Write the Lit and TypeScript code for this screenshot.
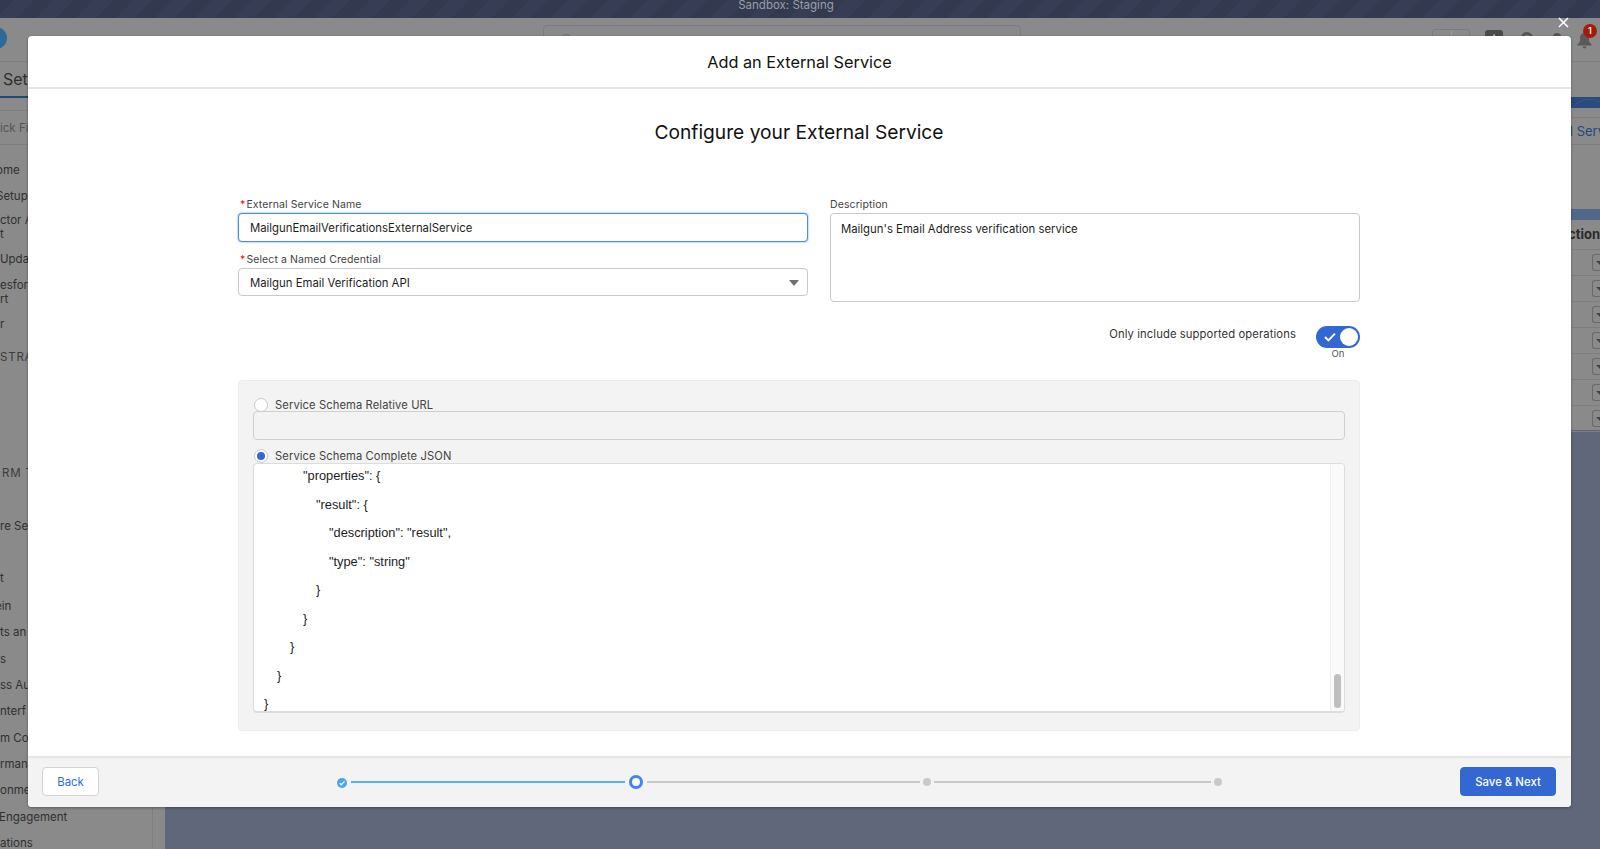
import { LitElement, css, html } from 'lit'
import { customElement } from 'lit/decorators.js'

// bits of the setup menu that stick out left of the dialog
const menu = [
  { text: '', h: 12 },
  { text: 'ome', h: 26, x: -4 },
  { text: 'Setup', h: 26, x: -4 },
  { text: 'ctor A\nt', h: 36 },
  { text: 'Upda', h: 27 },
  { text: 'esforc\nrt', h: 39 },
  { text: 'r', h: 26 },
  { text: 'STRA', h: 40, head: true },
  { text: '', h: 83 },
  { text: 'RM T', h: 26, head: true, x: 2 },
  { text: '', h: 27 },
  { text: 're Se', h: 26 },
  { text: '', h: 26 },
  { text: 't', h: 26 },
  { text: '', h: 2 },
  { text: 'ein', h: 26.3, x: -5 },
  { text: 'ts an', h: 26.3 },
  { text: 's', h: 26.3 },
  { text: 'ss Au', h: 26.3 },
  { text: 'nterf', h: 26.3 },
  { text: 'm Co', h: 26.3 },
  { text: 'rmanc', h: 26.3 },
  { text: 'onmen', h: 26.3 },
  { text: 'Engagement', h: 26.3, x: -1 },
  { text: 'ations', h: 26.3 },
]

const schema = [
  { level: 3, text: '"properties": {' },
  { level: 4, text: '"result": {' },
  { level: 5, text: '"description": "result",' },
  { level: 5, text: '"type": "string"' },
  { level: 4, text: '}' },
  { level: 3, text: '}' },
  { level: 2, text: '}' },
  { level: 1, text: '}' },
  { level: 0, text: '}' },
]

@customElement('app-root')
export class AppRoot extends LitElement {
  static styles = css`
    :host {
      display: block;
      position: relative;
      height: 100vh;
      overflow: hidden;
      font-family: Inter, 'Liberation Sans', sans-serif;
      background: #61677a;
    }

    /* page behind the dialog */
    .sandbox {
      height: 18px;
      background: repeating-linear-gradient(-45deg, #363d54 0 14px, #333a50 14px 28px);
      color: #9b9da6;
      font-size: 11.5px;
      line-height: 10px;
      text-align: center;
      padding-right: 28px;
      box-sizing: border-box;
      overflow: hidden;
    }
    .nav {
      height: 44px;
      box-sizing: border-box;
      background: #8a8a8a;
      border-bottom: 1px solid #7e7e7e;
      display: flex;
      align-items: flex-start;
      padding: 9px 8px 0 0;
      overflow: hidden;
    }
    .logo {
      width: 22px;
      height: 22px;
      border-radius: 50%;
      background: #2d6a9c;
      margin-left: -15px;
    }
    .search {
      width: 478px;
      height: 30px;
      box-sizing: border-box;
      margin: -2px 0 0 536px;
      border: 1px solid #7c7c7c;
      border-radius: 4px;
      font-size: 12px;
      line-height: 30px;
      color: #6d6d6d;
      padding-left: 46px;
      position: relative;
    }
    .search::before {
      content: '';
      position: absolute;
      left: 18px;
      top: 8px;
      width: 7px;
      height: 7px;
      border: 1.5px solid #6d6d6d;
      border-radius: 50%;
    }
    .tools {
      margin-left: auto;
      display: flex;
      align-items: flex-start;
    }
    .split {
      width: 38px;
      height: 22px;
      margin-top: 2px;
      box-sizing: border-box;
      border: 1px solid #7c7c7c;
      border-radius: 3px;
      display: flex;
      justify-content: flex-end;
    }
    .split span {
      width: 17px;
      border-left: 1px solid #9a9a9a;
    }
    .plus {
      width: 18px;
      height: 18px;
      margin: 3px 18px 0 15px;
      border-radius: 3px;
      background: #4a4a4a;
      color: #ddd;
      font-size: 16px;
      line-height: 15px;
      text-align: center;
    }
    .round {
      width: 12px;
      height: 12px;
      margin: 5px 18px 0 0;
      box-sizing: border-box;
      border: 3px solid #555;
      border-radius: 50%;
    }
    .round.gear {
      width: 8px;
      height: 8px;
      border: 0;
      background: #555;
      margin: 6px 16px 0 2px;
    }
    .bell {
      position: relative;
      width: 15px;
      height: 16px;
      margin-top: 6px;
    }
    .bell svg {
      display: block;
    }
    .badge {
      position: absolute;
      top: -9px;
      left: 6px;
      width: 14px;
      height: 14px;
      border-radius: 50%;
      background: #a31c0b;
      color: #eee;
      font-size: 9px;
      font-weight: 600;
      line-height: 14px;
      text-align: center;
    }
    .tabs {
      height: 36px;
      box-sizing: border-box;
      background: #8a8a8a;
      border-bottom: 1px solid #7e7e7e;
    }
    .tab {
      width: 40px;
      height: 36px;
      box-sizing: border-box;
      border-bottom: 2px solid #1e4a74;
      padding: 7px 0 0 3px;
      font-size: 16px;
      line-height: 20px;
      color: #2f2f2f;
    }
    .content {
      display: flex;
      height: 751px;
    }
    .side {
      width: 165px;
      box-sizing: border-box;
      background: #8a8a8a;
      padding-top: 12px;
      overflow: hidden;
    }
    .side-in {
      width: 152px;
      height: 100%;
      border-right: 1px solid #7e7e7e;
    }
    .quick {
      height: 35px;
      box-sizing: border-box;
      border-top: 1px solid #7e7e7e;
      border-bottom: 1px solid #7e7e7e;
      font-size: 11.5px;
      line-height: 35px;
      color: #555;
    }
    .item {
      display: flex;
      align-items: center;
      font-size: 11.5px;
      line-height: 14px;
      color: #303030;
      white-space: pre;
    }
    .item.head {
      letter-spacing: 0.8px;
      color: #3c3c3c;
    }
    .rest {
      flex: 1;
      min-width: 0;
      margin-top: -1px;
    }
    .card {
      height: 333px;
      background: #8a8a8a;
    }
    .banner {
      height: 11px;
      background: repeating-radial-gradient(circle at 1425px 26px, #2b4a7d 0 11px, #365587 11px 12px);
    }
    .banner.low {
      background: #50688a;
    }
    .crumb {
      margin-top: 9px;
      height: 28px;
      box-sizing: border-box;
      border-top: 1px solid #7e7e7e;
      border-bottom: 1px solid #7e7e7e;
      text-align: right;
      font-size: 13px;
      line-height: 27px;
      color: #23477f;
      white-space: nowrap;
      overflow: hidden;
      margin-bottom: 64px;
    }
    .crumb span {
      margin-right: -5px;
    }
    .col-head {
      height: 30px;
      box-sizing: border-box;
      border-bottom: 1px solid #7e7e7e;
      text-align: right;
      font-size: 13px;
      font-weight: 700;
      line-height: 29px;
      color: #2a2a2a;
    }
    .row {
      height: 26px;
      box-sizing: border-box;
      border-bottom: 1px solid #7e7e7e;
      display: flex;
      justify-content: flex-end;
      align-items: center;
      overflow: hidden;
    }
    .row span {
      width: 8px;
      height: 17px;
      box-sizing: border-box;
      border: 1px solid #6a6a6a;
      border-right: 0;
      border-radius: 3px 0 0 3px;
      position: relative;
    }
    .row span::after {
      content: '';
      position: absolute;
      left: 3px;
      top: 6px;
      border-left: 4px solid transparent;
      border-right: 4px solid transparent;
      border-top: 4px solid #444;
    }

    /* dialog */
    .modal {
      position: absolute;
      left: 28px;
      top: 36px;
      width: 1543px;
      height: 771px;
      background: #fff;
      border-radius: 4px;
      box-shadow: 0 1px 3px rgba(0, 0, 0, 0.35);
      display: flex;
      flex-direction: column;
      overflow: hidden;
    }
    .close {
      position: absolute;
      left: 1558px;
      top: 17px;
      display: block;
    }
    .modal-head {
      height: 53px;
      box-sizing: border-box;
      border-bottom: 2px solid #e6e6e6;
      text-align: center;
      font-size: 16.3px;
      line-height: 53px;
      color: #111;
    }
    .modal-body {
      flex: 1;
      padding: 29px 211px 0 210px;
      min-height: 0;
    }
    h2 {
      margin: 0;
      font-size: 19.2px;
      font-weight: 400;
      line-height: 28px;
      text-align: center;
      color: #111;
    }
    .form {
      display: grid;
      grid-template-columns: 570px 530px;
      column-gap: 22px;
      margin-top: 51px;
    }
    .lab {
      font-size: 10.5px;
      line-height: 16px;
      color: #444;
      letter-spacing: 0.1px;
    }
    .req {
      color: #d4131b;
      margin: 0 1px 0 2px;
    }
    .lab.second {
      margin-top: 10px;
    }
    .box {
      box-sizing: border-box;
      border: 1px solid #c9c9c9;
      border-radius: 4px;
      background: #fff;
      font-size: 11.35px;
      color: #1d1d1d;
      padding: 0 11px;
    }
    .name {
      height: 29px;
      line-height: 28px;
      border: 1px solid #4a8af4;
      box-shadow: 0 0 2px #4a8af4;
    }
    .pick {
      height: 28px;
      line-height: 28px;
      position: relative;
    }
    .pick::after {
      content: '';
      position: absolute;
      right: 8px;
      top: 11px;
      border-left: 5px solid transparent;
      border-right: 5px solid transparent;
      border-top: 6px solid #707070;
    }
    .desc {
      height: 89px;
      line-height: 16px;
      padding: 7px 10px 0;
    }
    .only {
      margin-top: 25px;
      display: flex;
      justify-content: flex-end;
      gap: 20px;
      height: 28px;
    }
    .only-text {
      font-size: 11.25px;
      line-height: 14px;
      color: #333;
      letter-spacing: 0.1px;
    }
    .toggle-wrap {
      width: 44px;
      text-align: center;
      font-size: 9.5px;
      line-height: 10px;
      color: #555;
    }
    .toggle {
      height: 22px;
      margin: -1px 0 1px;
      box-sizing: border-box;
      border-radius: 11px;
      background: #3367d1;
      display: flex;
      align-items: center;
      justify-content: space-between;
      padding: 0 2px 0 8px;
    }
    .knob {
      width: 18px;
      height: 18px;
      border-radius: 50%;
      background: #fff;
    }
    .panel {
      margin-top: 25px;
      height: 351px;
      box-sizing: border-box;
      background: #f3f3f3;
      border: 1px solid #ececec;
      border-radius: 4px;
      padding: 16px 14px 0;
    }
    .radio {
      display: flex;
      align-items: center;
      gap: 7px;
      height: 16px;
      margin-bottom: -2px;
      font-size: 11.2px;
      color: #444;
      letter-spacing: 0.1px;
    }
    .radio.two {
      margin: 8px 0 0;
      height: 15px;
    }
    .dot {
      width: 14px;
      height: 14px;
      margin-left: 1px;
      box-sizing: border-box;
      border: 1px solid #c9c9c9;
      border-radius: 50%;
      background: #fff;
      display: flex;
      align-items: center;
      justify-content: center;
      flex: none;
    }
    .dot i {
      width: 8px;
      height: 8px;
      border-radius: 50%;
      background: #3367d1;
    }
    .off {
      height: 29px;
      box-sizing: border-box;
      background: #f3f3f3;
      border: 1px solid #cfcfcf;
      border-radius: 4px;
    }
    .json {
      height: 250px;
      box-sizing: border-box;
      background: #fff;
      border: 1px solid #dcdcdc;
      border-bottom-width: 2px;
      border-radius: 4px;
      display: flex;
      overflow: hidden;
    }
    .code {
      flex: 1;
      margin-top: -2px;
      padding-left: 10px;
      font-family: 'Liberation Sans', Arial, sans-serif;
      font-size: 12.8px;
      line-height: 28.5px;
      color: #1d1d1d;
      overflow: hidden;
    }
    .code div {
      white-space: pre;
    }
    .bar {
      width: 13px;
      background: #fafafa;
      border-left: 1px solid #ececec;
      display: flex;
      flex-direction: column;
      justify-content: flex-end;
      align-items: center;
      padding-bottom: 3px;
    }
    .bar i {
      width: 7px;
      height: 34px;
      border-radius: 4px;
      background: #bfbfbf;
    }
    .modal-foot {
      height: 51px;
      box-sizing: border-box;
      background: #f3f3f3;
      border-top: 2px solid #e6e6e6;
      display: flex;
      align-items: flex-start;
      padding: 9px 15px 0 14px;
    }
    .btn {
      height: 29px;
      box-sizing: border-box;
      border: 1px solid #d4d4d4;
      border-radius: 4px;
      background: #fff;
      color: #2f6fd6;
      font-size: 11.4px;
      line-height: 28px;
      text-align: center;
      width: 57px;
    }
    .btn.save {
      width: 96px;
      margin-left: auto;
      background: #3367d1;
      border-color: #3367d1;
      color: #fff;
      font-weight: 500;
    }
    .steps {
      display: flex;
      align-items: center;
      margin: 8px 0 0 238px;
      height: 14px;
    }
    .done {
      display: block;
      width: 10px;
      height: 10px;
      margin: 1px 4px 0 0;
    }
    .line {
      height: 2px;
      background: #c9c9c9;
    }
    .line.blue {
      background: #5ab0f5;
    }
    .now {
      width: 14px;
      height: 14px;
      box-sizing: border-box;
      border: 3px solid #3f84f7;
      border-radius: 50%;
      background: #fff;
      margin: 0 4px;
    }
    .next {
      width: 8px;
      height: 8px;
      border-radius: 50%;
      background: #c9c9c9;
      margin: 0 3px;
    }
  `

  render() {
    return html`
      <div class="sandbox">Sandbox: Staging</div>
      <div class="nav">
        <div class="logo"></div>
        <div class="search">Search Setup</div>
        <div class="tools">
          <div class="split"><span></span></div>
          <div class="plus">+</div>
          <div class="round"></div>
          <div class="round gear"></div>
          <div class="bell">
            <svg width="15" height="16" viewBox="0 0 15 16">
              <path fill="#5a5a5a" d="M7.5 0C4.6 0 3 2.2 3 5v3.4L.6 11.3c-.4.5-.1 1.2.6 1.2h12.6c.7 0 1-.7.6-1.2L12 8.4V5c0-2.8-1.6-5-4.5-5z" />
              <path fill="#5a5a5a" d="M5.6 13.6h3.8c0 1.2-.8 2-1.9 2s-1.9-.8-1.9-2z" />
            </svg>
            <span class="badge">1</span>
          </div>
        </div>
      </div>
      <div class="tabs"><div class="tab">Set</div></div>
      <div class="content">
        <div class="side">
          <div class="side-in">
            <div class="quick">ick Fi</div>
            ${menu.map(
              (m) => html`<div class="item ${m.head ? 'head' : ''}" style="height:${m.h}px;margin-left:${m.x || 0}px">${m.text}</div>`
            )}
          </div>
        </div>
        <div class="rest">
          <div class="card">
            <div class="banner"></div>
            <div class="crumb"><span>External Serv</span></div>
            <div class="banner low"></div>
            <div class="col-head">Action</div>
            ${[1, 2, 3, 4, 5, 6, 7].map(() => html`<div class="row"><span></span></div>`)}
          </div>
        </div>
      </div>

      <div class="modal">
        <div class="modal-head">Add an External Service</div>
        <div class="modal-body">
          <h2>Configure your External Service</h2>
          <div class="form">
            <div>
              <div class="lab"><span class="req">*</span>External Service Name</div>
              <div class="box name">MailgunEmailVerificationsExternalService</div>
              <div class="lab second"><span class="req">*</span>Select a Named Credential</div>
              <div class="box pick">Mailgun Email Verification API</div>
            </div>
            <div>
              <div class="lab">Description</div>
              <div class="box desc">Mailgun's Email Address verification service</div>
            </div>
          </div>
          <div class="only">
            <div class="only-text">Only include supported operations</div>
            <div class="toggle-wrap">
              <div class="toggle">
                <svg width="12" height="10" viewBox="0 0 12 10">
                  <path d="M1 5l3.4 3.4L11 1.6" fill="none" stroke="#fff" stroke-width="2" />
                </svg>
                <div class="knob"></div>
              </div>
              <div>On</div>
            </div>
          </div>
          <div class="panel">
            <div class="radio"><span class="dot"></span>Service Schema Relative URL</div>
            <div class="off"></div>
            <div class="radio two"><span class="dot"><i></i></span>Service Schema Complete JSON</div>
            <div class="json">
              <div class="code">
                ${schema.map((l) => html`<div style="padding-left:${l.level * 13}px">${l.text}</div>`)}
              </div>
              <div class="bar"><i></i></div>
            </div>
          </div>
        </div>
        <div class="modal-foot">
          <div class="btn">Back</div>
          <div class="steps">
            <svg class="done" viewBox="0 0 10 10">
              <circle cx="5" cy="5" r="5" fill="#4aa3f0" />
              <path d="M2.6 5.2l1.7 1.6 3.2-3.4" fill="none" stroke="#fff" stroke-width="1.3" />
            </svg>
            <div class="line blue" style="width:274px"></div>
            <div class="now"></div>
            <div class="line" style="width:273px"></div>
            <div class="next"></div>
            <div class="line" style="width:277px"></div>
            <div class="next"></div>
          </div>
          <div class="btn save">Save &amp; Next</div>
        </div>
      </div>
      <svg class="close" width="11" height="11" viewBox="0 0 11 11">
        <path d="M1 1l9 9M10 1l-9 9" stroke="#fff" stroke-width="1.5" fill="none" />
      </svg>
    `
  }
}
